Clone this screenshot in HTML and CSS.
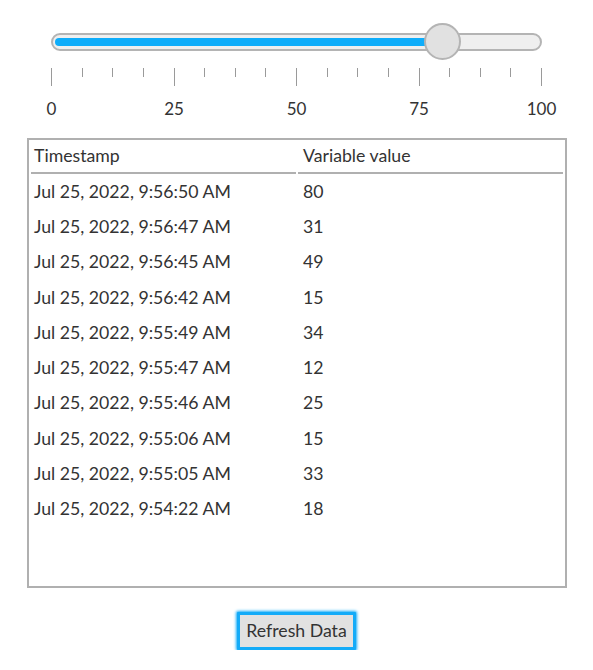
FILE: index.html
```html
<!DOCTYPE html>
<html>
<head>
<meta charset="utf-8">
<link rel="stylesheet" href="styles.css">
</head>
<body>
<div class="page">
  <div class="slider">
    <div class="track">
      <div class="fill" style="width: 80%"></div>
      <div class="thumb" style="left: 80%"></div>
    </div>
    <div class="ticks">
      <span class="tick major"></span><span class="tick"></span><span class="tick"></span><span class="tick"></span>
      <span class="tick major"></span><span class="tick"></span><span class="tick"></span><span class="tick"></span>
      <span class="tick major"></span><span class="tick"></span><span class="tick"></span><span class="tick"></span>
      <span class="tick major"></span><span class="tick"></span><span class="tick"></span><span class="tick"></span>
      <span class="tick major"></span>
    </div>
    <div class="labels">
      <span class="label"><span>0</span></span>
      <span class="label"><span>25</span></span>
      <span class="label"><span>50</span></span>
      <span class="label"><span>75</span></span>
      <span class="label"><span>100</span></span>
    </div>
  </div>

  <div class="box">
    <table class="data">
      <thead>
        <tr><th>Timestamp</th><th>Variable value</th></tr>
      </thead>
      <tbody>
        <tr><td>Jul 25, 2022, 9:56:50 AM</td><td>80</td></tr>
        <tr><td>Jul 25, 2022, 9:56:47 AM</td><td>31</td></tr>
        <tr><td>Jul 25, 2022, 9:56:45 AM</td><td>49</td></tr>
        <tr><td>Jul 25, 2022, 9:56:42 AM</td><td>15</td></tr>
        <tr><td>Jul 25, 2022, 9:55:49 AM</td><td>34</td></tr>
        <tr><td>Jul 25, 2022, 9:55:47 AM</td><td>12</td></tr>
        <tr><td>Jul 25, 2022, 9:55:46 AM</td><td>25</td></tr>
        <tr><td>Jul 25, 2022, 9:55:06 AM</td><td>15</td></tr>
        <tr><td>Jul 25, 2022, 9:55:05 AM</td><td>33</td></tr>
        <tr><td>Jul 25, 2022, 9:54:22 AM</td><td>18</td></tr>
      </tbody>
    </table>
  </div>

  <div class="actions">
    <button class="refresh">Refresh Data</button>
  </div>
</div>
</body>
</html>
```

FILE: styles.css
```css
html, body {
  margin: 0;
  padding: 0;
  background: #ffffff;
}

body {
  font-family: Lato, "Open Sans", sans-serif;
  font-size: 16px;
  color: #333333;
}

.page {
  width: 593px;
  padding-top: 33px;
}

.slider {
  margin-left: 51px;
  width: 491px;
}

.track {
  position: relative;
  height: 18px;
  box-sizing: border-box;
  border: 2px solid #b4b4b4;
  border-radius: 9px;
  background: #efefef;
  padding: 3px 2px;
}

.fill {
  height: 100%;
  background: #0eadfa;
  border-radius: 5px;
}

.thumb {
  position: absolute;
  top: 50%;
  width: 37px;
  height: 37px;
  box-sizing: border-box;
  margin-left: -19px;
  margin-top: -19px;
  border: 2px solid #b4b4b4;
  border-radius: 50%;
  background: #e1e1e1;
}

.ticks {
  display: flex;
  justify-content: space-between;
  align-items: flex-start;
  margin-top: 17px;
  height: 18px;
}

.tick {
  width: 1px;
  height: 9px;
  background: #9a9a9a;
}

.tick.major {
  height: 18px;
}

.labels {
  display: flex;
  justify-content: space-between;
  margin-top: 13px;
  line-height: 20px;
  font-size: 17px;
}

.label {
  width: 1px;
  display: flex;
  justify-content: center;
  white-space: nowrap;
}

.box {
  margin: 19px 0 0 27px;
  width: 540px;
  height: 450px;
  box-sizing: border-box;
  border: 2px solid #b0b0b0;
  font-size: 17.7px;
}

.data {
  width: 100%;
  border-collapse: separate;
  border-spacing: 2px;
  table-layout: fixed;
}

.data th {
  text-align: left;
  font-weight: normal;
  height: 27px;
  padding: 0 4px 3px 3px;
  border-bottom: 2px solid #b0b0b0;
}

.data td {
  height: 30.3px;
  padding: 0 4px 3px 3px;
  white-space: nowrap;
}

.data td + td,
.data th + th {
  padding-left: 5px;
}

.actions {
  display: flex;
  justify-content: center;
  margin-top: 24px;
}

.refresh {
  font-family: Lato, "Open Sans", sans-serif;
  font-size: 17.7px;
  color: #333333;
  background: #e1e1e1;
  border: 3px solid #13abf8;
  box-shadow: 0 0 3px 1px #13abf8;
  border-radius: 1px;
  padding: 5px 6px;
  line-height: 22px;
}
```
